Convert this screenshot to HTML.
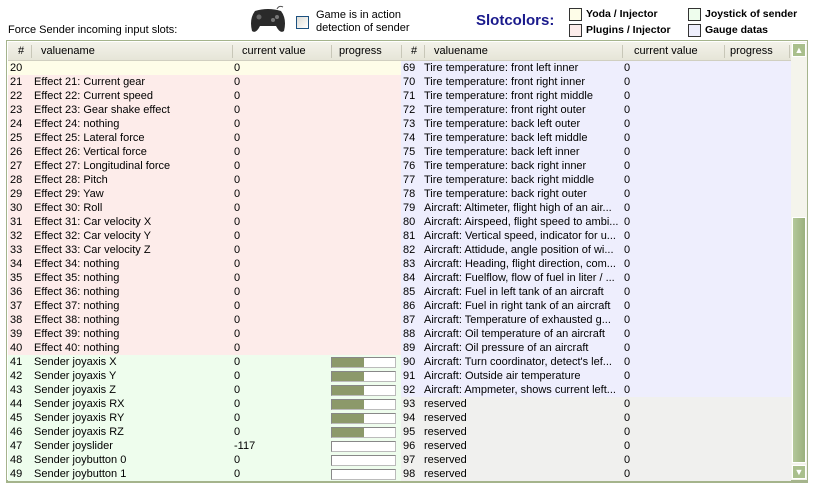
<!DOCTYPE html><html><head><style>
body{margin:0;width:815px;height:491px;background:#fff;font-family:"Liberation Sans",sans-serif;font-size:11px;color:#000;position:relative;overflow:hidden}
.a{position:absolute;white-space:nowrap}
.grid{position:absolute;left:6px;top:40px;width:802px;height:443px;border:1px solid #a5b48c;border-bottom:3px solid #a5b48c;background:#fff;box-sizing:border-box}
.hdr{position:absolute;left:1px;top:1px;width:783px;height:18px;background:linear-gradient(#f3f2ea,#e6e5d8);border-bottom:1px solid #d0cfc0}
.hdr span{position:absolute;top:3px}
.sep{position:absolute;top:3px;width:1px;height:13px;background:#c8c7b8}
.row{position:absolute;height:14px;line-height:14px}
.row span{position:absolute;top:0;white-space:nowrap;overflow:hidden}
.pb{position:absolute;top:2px;width:63px;height:9px;border:1px solid #888;border-right-color:#bbb;border-bottom-color:#bbb;background:#fff}
.pb i{position:absolute;left:0;top:0;width:32px;height:9px;background:#8c996a}
.cb{position:absolute;width:11px;height:11px;border:1px solid #333}
.lg{font:bold 10.5px "Liberation Sans",sans-serif}
</style></head><body>
<div class="a" style="left:8px;top:24px">Force Sender incoming input slots:</div>
<svg class="a" style="left:249px;top:5px" width="38" height="30" viewBox="0 0 38 30"><path d="M6 6 Q19 2 32 6 Q38 14 35 26 Q31 29 27 21 L11 21 Q7 29 3 26 Q0 14 6 6Z" fill="#2a2a2a"/><path d="M28 4 Q30 0 34 2" stroke="#555" fill="none"/><circle cx="10" cy="12" r="2.5" fill="#666"/><circle cx="28" cy="12" r="2" fill="#777"/><circle cx="24" cy="15" r="2" fill="#777"/></svg>
<div class="cb" style="left:296px;top:16px;border-color:#1c5180;background:linear-gradient(135deg,#dcdcd6,#fff)"></div>
<div class="a" style="left:316px;top:9px;line-height:13px">Game is in action<br>detection of sender</div>
<div class="a" style="left:476px;top:12px;font:bold 15px 'Liberation Sans',sans-serif;color:#1a1a8c">Slotcolors:</div>
<div class="cb" style="left:569px;top:8px;background:#fefde8"></div><div class="a lg" style="left:586px;top:8px">Yoda / Injector</div>
<div class="cb" style="left:569px;top:24px;background:#fdecea"></div><div class="a lg" style="left:586px;top:24px">Plugins / Injector</div>
<div class="cb" style="left:688px;top:8px;background:#eefded"></div><div class="a lg" style="left:705px;top:8px">Joystick of sender</div>
<div class="cb" style="left:688px;top:24px;background:#eeeefd"></div><div class="a lg" style="left:705px;top:24px">Gauge datas</div>
<div class="grid">
<div class="hdr"><span style="left:10px">#</span><div class="sep" style="left:23px"></div><span style="left:33px">valuename</span><div class="sep" style="left:224px"></div><span style="left:234px">current value</span><div class="sep" style="left:323px"></div><span style="left:331px">progress</span><div class="sep" style="left:393px"></div><span style="left:403px">#</span><div class="sep" style="left:416px"></div><span style="left:426px">valuename</span><div class="sep" style="left:614px"></div><span style="left:626px">current value</span><div class="sep" style="left:716px"></div><span style="left:722px">progress</span><div class="sep" style="left:781px"></div></div>
<div id="rows"></div>
<div style="position:absolute;left:784px;top:1px;width:16px;height:438px;background:#f4f4ec"></div>
<div style="position:absolute;left:785px;top:2px;width:14px;height:14px;background:#a9bf8c;border:1px solid #fff;box-sizing:border-box;color:#fff;font-size:9px;text-align:center;line-height:12px">▲</div>
<div style="position:absolute;left:785px;top:176px;width:14px;height:246px;background:linear-gradient(90deg,#b4c89a,#9ab07c);border:1px solid #fff;box-sizing:border-box"></div>
<div style="position:absolute;left:785px;top:424px;width:14px;height:14px;background:#a9bf8c;border:1px solid #fff;box-sizing:border-box;color:#fff;font-size:9px;text-align:center;line-height:12px">▼</div>
</div>
<script>
var L=["","Effect 21: Current gear","Effect 22: Current speed","Effect 23: Gear shake effect","Effect 24: nothing","Effect 25: Lateral force","Effect 26: Vertical force","Effect 27: Longitudinal force","Effect 28: Pitch","Effect 29: Yaw","Effect 30: Roll","Effect 31: Car velocity X","Effect 32: Car velocity Y","Effect 33: Car velocity Z","Effect 34: nothing","Effect 35: nothing","Effect 36: nothing","Effect 37: nothing","Effect 38: nothing","Effect 39: nothing","Effect 40: nothing","Sender joyaxis X","Sender joyaxis Y","Sender joyaxis Z","Sender joyaxis RX","Sender joyaxis RY","Sender joyaxis RZ","Sender joyslider","Sender joybutton 0","Sender joybutton 1"];
var R=["Tire temperature: front left inner","Tire temperature: front right inner","Tire temperature: front right middle","Tire temperature: front right outer","Tire temperature: back left outer","Tire temperature: back left middle","Tire temperature: back left inner","Tire temperature: back right inner","Tire temperature: back right middle","Tire temperature: back right outer","Aircraft: Altimeter, flight high of an air...","Aircraft: Airspeed, flight speed to ambi...","Aircraft: Vertical speed, indicator for u...","Aircraft: Attidude, angle position of wi...","Aircraft: Heading, flight direction, com...","Aircraft: Fuelflow, flow of fuel in liter / ...","Aircraft: Fuel in left tank of an aircraft","Aircraft: Fuel in right tank of an aircraft","Aircraft: Temperature of exhausted g...","Aircraft: Oil temperature of an aircraft","Aircraft: Oil pressure of an aircraft","Aircraft: Turn coordinator, detect's lef...","Aircraft: Outside air temperature","Aircraft: Ampmeter, shows current left...","reserved","reserved","reserved","reserved","reserved","reserved"];
var h="";
for(var i=0;i<30;i++){var y=20+i*14;
var lc=i==0?"#fefde8":i<21?"#fdecea":"#eefded";var rc=i<24?"#eeeefd":"#f0f0ee";
var v=i==27?"-117":"0";
h+='<div class="row" style="left:1px;top:'+y+'px;width:393px;background:'+lc+'"><span style="left:2px">'+(20+i)+'</span><span style="left:26px;width:196px">'+L[i]+'</span><span style="left:226px">'+v+'</span>'+(i>=21?'<div class="pb" style="left:323px">'+(i<27?'<i></i>':'')+'</div>':'')+'</div>';
h+='<div class="row" style="left:394px;top:'+y+'px;width:390px;background:'+rc+'"><span style="left:2px">'+(69+i)+'</span><span style="left:23px;width:199px">'+R[i]+'</span><span style="left:223px">0</span></div>';}
document.getElementById("rows").innerHTML=h;
</script>
</body></html>
